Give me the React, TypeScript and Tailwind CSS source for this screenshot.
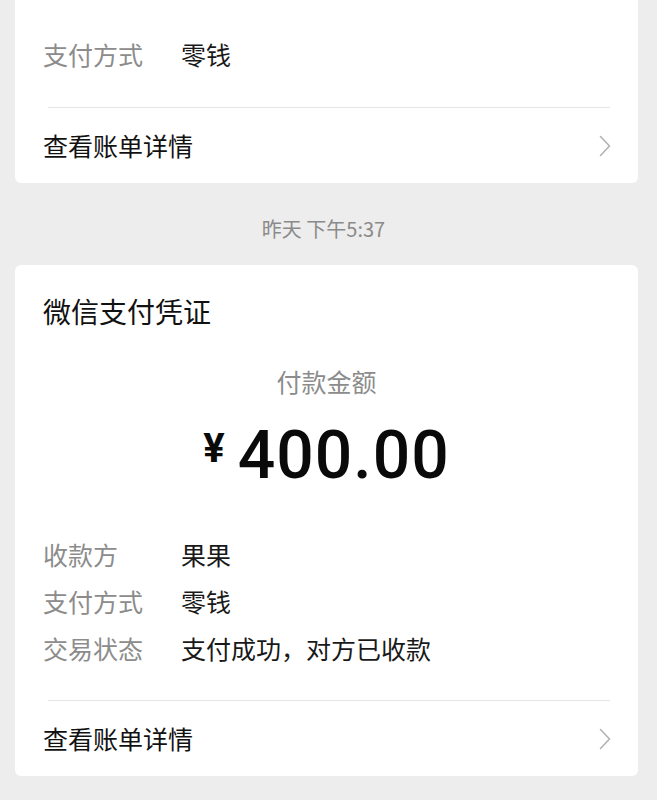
import React from 'react';

const cjk = { fontFamily: '"Noto Sans CJK SC", "Noto Sans", sans-serif' };

const Chevron: React.FC = () => (
  <svg width="12" height="22" viewBox="0 0 12 22" fill="none">
    <path d="M1.5 1.5 L10.5 11 L1.5 20.5" stroke="#b2b2b2" strokeWidth="1.6" strokeLinecap="round" strokeLinejoin="round" />
  </svg>
);

const InfoRow: React.FC<{ label: string; value: string }> = ({ label, value }) => (
  <div className="flex h-[47px] items-center px-[28px] text-[25px]">
    <span className="w-[138px] shrink-0 text-[#8c8c8c]">{label}</span>
    <span className="text-[#191919]">{value}</span>
  </div>
);

const Footer: React.FC<{ lineGap: string; textTop: string }> = ({ lineGap, textTop }) => (
  <>
    <div className={`ml-[33px] mr-[28px] h-px bg-[#e6e6e6] ${lineGap}`} />
    <div className={`flex h-[75px] items-center justify-between pl-[28px] pr-[27px] ${textTop}`}>
      <span className="text-[25px] text-[#111]">查看账单详情</span>
      <Chevron />
    </div>
  </>
);

export default function App() {
  return (
    <div className="min-h-[800px] w-full overflow-hidden bg-[#ededed]" style={cjk}>
      <div className="ml-[15px] w-[623px] rounded-b-md bg-white pt-[31px]">
        <InfoRow label="支付方式" value="零钱" />
        <Footer lineGap="mt-[29px]" textTop="pt-0" />
      </div>

      <div className="flex h-[82px] items-center justify-center pr-[10px] pt-[10px] text-[20px] text-[#8a8a8a]">
        昨天 下午5:37
      </div>

      <div className="ml-[15px] w-[623px] rounded-md bg-white pt-[30px]">
        <div className="flex h-[32px] items-center px-[28px] text-[28px] text-[#111]">微信支付凭证</div>
        <div className="mt-[38px] flex h-[34px] items-center justify-center text-[25px] text-[#8c8c8c]">
          付款金额
        </div>
        <div className="mt-[17px] flex h-[80px] items-center justify-center text-[#0a0a0a]" style={{ fontFamily: 'Roboto, "Noto Sans", sans-serif' }}>
          <span className="mb-[14px] mr-[13px] text-[40px] font-bold leading-none">¥</span>
          <span className="text-[66px] font-medium leading-none tracking-[1px]">400.00</span>
        </div>
        <div className="mt-[35px]">
          <InfoRow label="收款方" value="果果" />
          <InfoRow label="支付方式" value="零钱" />
          <InfoRow label="交易状态" value="支付成功，对方已收款" />
        </div>
        <Footer lineGap="mt-[28px]" textTop="pt-0" />
      </div>
    </div>
  );
}
